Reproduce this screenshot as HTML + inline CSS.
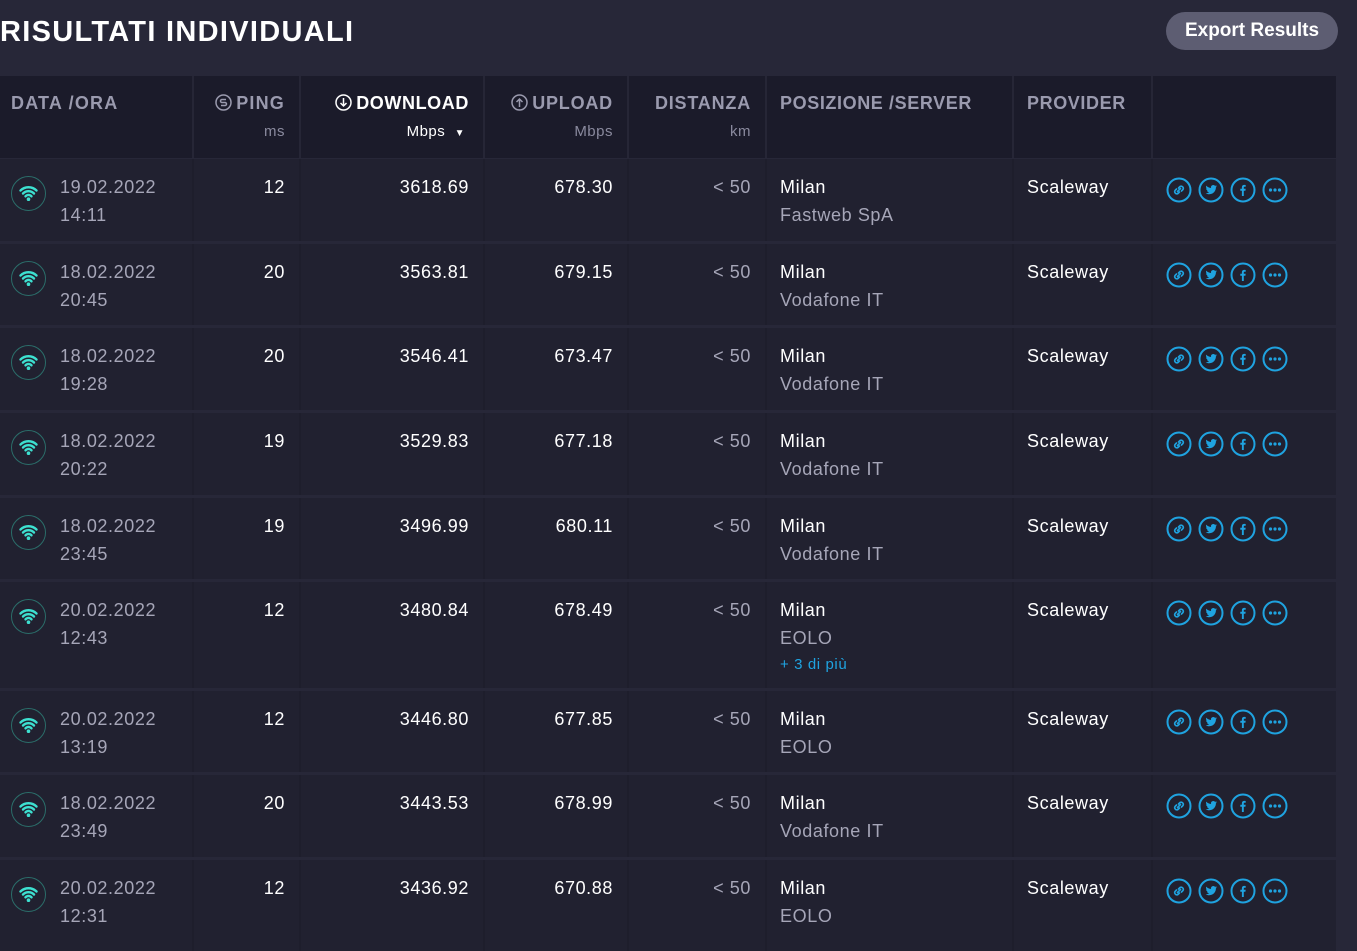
<!DOCTYPE html>
<html><head><meta charset="utf-8"><style>
*{margin:0;padding:0;box-sizing:border-box}
body{width:1357px;height:951px;background:#272738;font-family:"Liberation Sans",sans-serif;overflow:hidden;position:relative;color:#fff}
h1{position:absolute;left:0;top:16px;font-size:29px;font-weight:bold;letter-spacing:1.3px;color:#fff}
.btn{position:absolute;left:1166px;top:12px;width:172px;height:38px;border-radius:19px;background:#5d5d72;color:#fff;font-size:19px;font-weight:bold;text-align:center;line-height:38px}
.row{position:absolute;left:0;width:1336px;background:#212130}
.hdr{background:#1b1b2a;top:76px;height:82px}
.c{position:absolute;top:0;bottom:0;border-right:2px solid #1e1e2c}
.hdr .c{border-right:2px solid #262636}
.h{font-size:18px;font-weight:bold;color:#9a9aae;position:absolute;top:17px;white-space:nowrap;letter-spacing:1.2px}
.u{font-size:15px;color:#8a8a9e;position:absolute;top:47px;right:14px;letter-spacing:.5px}
.t{position:absolute;top:18px;font-size:18px;white-space:nowrap;letter-spacing:.6px}
.g{color:#a6a6b8}
.r{right:14px}
.w{color:#fff}
.wifi{position:absolute;left:11px;top:17px;width:35px;height:35px;border:1px solid #2b6e6a;border-radius:50%}
.ic{position:absolute;top:18px;left:1166px;display:flex;gap:6px}
.ic svg{width:26px;height:26px}
</style></head><body>
<h1>RISULTATI INDIVIDUALI</h1>
<div class="btn">Export Results</div>
<div class="row hdr">
<div class="c" style="left:0;width:194px"><span class="h" style="left:11px">DATA /ORA</span></div>
<div class="c" style="left:194px;width:107px"><span class="h" style="right:14px"><svg width="17" height="17" viewBox="0 0 17 17" style="vertical-align:-2px;margin-right:4px"><circle cx="8.5" cy="8.5" r="7.5" fill="none" stroke="#9a9aae" stroke-width="1.5"/><path d="M11 5.5H7a1.5 1.5 0 000 3h3a1.5 1.5 0 010 3H6" fill="none" stroke="#9a9aae" stroke-width="1.5"/></svg>PING</span><span class="u">ms</span></div>
<div class="c" style="left:301px;width:184px"><span class="h w" style="right:14px;color:#fff;letter-spacing:.6px"><svg width="17" height="17" viewBox="0 0 17 17" style="vertical-align:-2px;margin-right:4px"><circle cx="8.5" cy="8.5" r="7.5" fill="none" stroke="#fff" stroke-width="1.5"/><path d="M8.5 4v8M5.5 9l3 3 3-3" fill="none" stroke="#fff" stroke-width="1.5"/></svg>DOWNLOAD</span><span class="u" style="color:#fff;right:18px">Mbps &nbsp;<span style="font-size:10px">▼</span></span></div>
<div class="c" style="left:485px;width:144px"><span class="h" style="right:14px;letter-spacing:.8px"><svg width="17" height="17" viewBox="0 0 17 17" style="vertical-align:-2px;margin-right:4px"><circle cx="8.5" cy="8.5" r="7.5" fill="none" stroke="#9a9aae" stroke-width="1.5"/><path d="M8.5 13V5M5.5 8l3-3 3 3" fill="none" stroke="#9a9aae" stroke-width="1.5"/></svg>UPLOAD</span><span class="u">Mbps</span></div>
<div class="c" style="left:629px;width:138px"><span class="h" style="right:14px;letter-spacing:.8px">DISTANZA</span><span class="u">km</span></div>
<div class="c" style="left:767px;width:247px"><span class="h" style="left:13px;letter-spacing:.6px">POSIZIONE /SERVER</span></div>
<div class="c" style="left:1014px;width:139px"><span class="h" style="left:13px;letter-spacing:.6px">PROVIDER</span></div>
</div>
<div id="rows"></div>
<script>
var d=[["19.02.2022","14:11","12","3618.69","678.30","Fastweb SpA"],["18.02.2022","20:45","20","3563.81","679.15","Vodafone IT"],["18.02.2022","19:28","20","3546.41","673.47","Vodafone IT"],["18.02.2022","20:22","19","3529.83","677.18","Vodafone IT"],["18.02.2022","23:45","19","3496.99","680.11","Vodafone IT"],["20.02.2022","12:43","12","3480.84","678.49","EOLO",1],["20.02.2022","13:19","12","3446.80","677.85","EOLO"],["18.02.2022","23:49","20","3443.53","678.99","Vodafone IT"],["20.02.2022","12:31","12","3436.92","670.88","EOLO"]];
var tops=[159,244,328,413,498,582,691,775,860],hs=[82,81,82,82,81,106,81,82,91];
var col='#1fa3e0';
var icons='<svg viewBox="0 0 26 26"><circle cx="13" cy="13" r="11.5" fill="none" stroke="'+col+'" stroke-width="2"/><path d="M11.5 14.5l3-3M10.5 12l-1.5 1.5a2.2 2.2 0 003 3l1.5-1.5M15.5 14l1.5-1.5a2.2 2.2 0 00-3-3L12.5 11" fill="none" stroke="'+col+'" stroke-width="1.6" stroke-linecap="round"/></svg>'+
'<svg viewBox="0 0 26 26"><circle cx="13" cy="13" r="11.5" fill="none" stroke="'+col+'" stroke-width="2"/><path d="M19 9.2c-.5.2-.9.3-1.4.4.5-.3.9-.8 1-1.3-.5.3-1 .5-1.5.6a2.3 2.3 0 00-4 2.1c-2-.1-3.7-1-4.8-2.4-.6 1.1-.2 2.4.7 3-.4 0-.7-.1-1-.3 0 1.1.8 2.1 1.9 2.3-.4.1-.7.1-1 0 .3 1 1.2 1.6 2.2 1.6-1 .8-2.3 1.1-3.4 1 1 .7 2.3 1 3.6 1 4.3 0 6.7-3.6 6.6-6.8.5-.3.8-.7 1.1-1.2z" fill="'+col+'"/></svg>'+
'<svg viewBox="0 0 26 26"><circle cx="13" cy="13" r="11.5" fill="none" stroke="'+col+'" stroke-width="2"/><path d="M13.8 19v-5.3h1.6l.3-1.9h-1.9v-1.2c0-.6.2-.9.9-.9h1v-1.7c-.3 0-.9-.1-1.5-.1-1.5 0-2.3.9-2.3 2.4v1.5h-1.6v1.9h1.6V19z" fill="'+col+'"/></svg>'+
'<svg viewBox="0 0 26 26"><circle cx="13" cy="13" r="11.5" fill="none" stroke="'+col+'" stroke-width="2"/><circle cx="8.5" cy="13" r="1.6" fill="'+col+'"/><circle cx="13" cy="13" r="1.6" fill="'+col+'"/><circle cx="17.5" cy="13" r="1.6" fill="'+col+'"/></svg>';
var wifi='<div class="wifi"><svg width="35" height="35" viewBox="0 0 35 35" style="position:absolute;left:-1px;top:-1px"><path d="M9.5 14.5a11.5 11.5 0 0116 0M12 17.5a7.8 7.8 0 0111 0M14.5 20.3a4 4 0 016 0" fill="none" stroke="#3de0d0" stroke-width="2.4" stroke-linecap="round"/><circle cx="17.5" cy="23.2" r="1.8" fill="#3de0d0"/></svg></div>';
var h='';
d.forEach(function(r,i){
h+='<div class="row" style="top:'+tops[i]+'px;height:'+hs[i]+'px">'+
'<div class="c" style="left:0;width:194px">'+wifi+'<span class="t g" style="left:60px;top:18px">'+r[0]+'</span><span class="t g" style="left:60px;top:46px">'+r[1]+'</span></div>'+
'<div class="c" style="left:194px;width:107px"><span class="t r">'+r[2]+'</span></div>'+
'<div class="c" style="left:301px;width:184px"><span class="t r">'+r[3]+'</span></div>'+
'<div class="c" style="left:485px;width:144px"><span class="t r">'+r[4]+'</span></div>'+
'<div class="c" style="left:629px;width:138px"><span class="t r g">&lt; 50</span></div>'+
'<div class="c" style="left:767px;width:247px"><span class="t" style="left:13px">Milan</span><span class="t g" style="left:13px;top:46px">'+r[5]+'</span>'+(r[6]?'<span class="t" style="left:13px;top:74px;font-size:15px;color:#1fa3e0">+ 3 di più</span>':'')+'</div>'+
'<div class="c" style="left:1014px;width:139px"><span class="t" style="left:13px">Scaleway</span></div>'+
'<div class="ic">'+icons+'</div></div>';});
document.getElementById('rows').innerHTML=h;
</script>
</body></html>
